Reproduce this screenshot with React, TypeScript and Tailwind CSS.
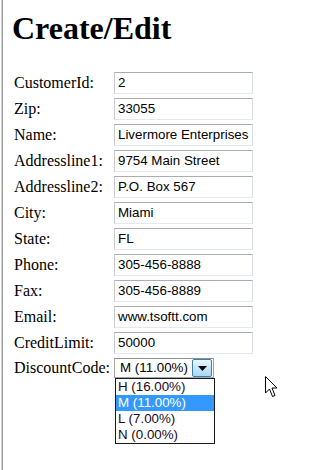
const fields: [string, string][] = [
  ["CustomerId:", "2"],
  ["Zip:", "33055"],
  ["Name:", "Livermore Enterprises"],
  ["Addressline1:", "9754 Main Street"],
  ["Addressline2:", "P.O. Box 567"],
  ["City:", "Miami"],
  ["State:", "FL"],
  ["Phone:", "305-456-8888"],
  ["Fax:", "305-456-8889"],
  ["Email:", "www.tsoftt.com"],
  ["CreditLimit:", "50000"],
];

const options = ["H (16.00%)", "M (11.00%)", "L (7.00%)", "N (0.00%)"];

export default function App() {
  return (
    <div className="relative w-[295px] h-[470px] bg-white overflow-hidden font-['Liberation_Serif',serif] text-black">
      {/* left window edge */}
      <div className="absolute left-[1px] top-0 h-full w-[2px] border-l border-l-[#d4d4d4] border-r border-r-[#9a9a9a]"></div>

      <div className="pl-[12px]">
        <h1 className="pt-[10px] text-[32px] leading-[36px] font-bold">Create/Edit</h1>

        <div className="mt-[26px] ml-[2px] grid grid-cols-[100px_139px] auto-rows-[22px] gap-y-[4px] items-center text-[16px]">
          {fields.map(([label, value]) => (
            <div key={label} className="contents">
              <div className="leading-[22px] whitespace-nowrap">{label}</div>
              <div className="h-[22px] border border-t-[#abadb3] border-l-[#c8cad0] border-r-[#dbdfe6] border-b-[#e3e9ef] px-[3px] flex items-center font-['Liberation_Sans',Arial,sans-serif] text-[13.33px] whitespace-nowrap overflow-hidden">
                {value}
              </div>
            </div>
          ))}

          <div className="leading-[20px] whitespace-nowrap self-start">DiscountCode:</div>
          <div className="relative self-start">
            <div className="w-[100px] h-[20px] border border-[#a3a3a3] border-t-[#8e8f8f] flex items-center justify-between pl-[5px] pr-[1px] font-['Liberation_Sans',Arial,sans-serif] text-[13.33px]">
              <span>M (11.00%)</span>
              <div className="w-[20px] h-[18px] rounded-[2px] border border-[#3c7fb1] bg-gradient-to-b from-[#eaf6fd] via-[#c6e7f9] to-[#a7d9f5] flex items-center justify-center">
                <svg width="9" height="5" viewBox="0 0 9 5">
                  <polygon points="0,0 9,0 4.5,5" fill="#000" />
                </svg>
              </div>
            </div>
            <div className="absolute left-[1px] top-[20px] w-[100px] border border-[#1a1a1a] bg-white font-['Liberation_Sans',Arial,sans-serif] text-[13.33px]">
              {options.map((o) => (
                <div
                  key={o}
                  className={
                    o === "M (11.00%)"
                      ? "h-[16px] leading-[16px] pl-[2px] bg-[#3399ff] text-white"
                      : "h-[16px] leading-[16px] pl-[2px] text-[#1a0a1a]"
                  }
                >
                  {o}
                </div>
              ))}
            </div>
          </div>
        </div>
      </div>

      {/* mouse pointer */}
      <svg className="absolute left-[265px] top-[376px]" width="13" height="22" viewBox="0 0 13 22">
        <polygon
          points="0.5,0.5 0.5,17 4.5,13 7.5,20.5 10,19.5 7,12 12,12"
          fill="#fff"
          stroke="#000"
          strokeWidth="1"
          strokeLinejoin="miter"
        />
      </svg>
    </div>
  );
}
